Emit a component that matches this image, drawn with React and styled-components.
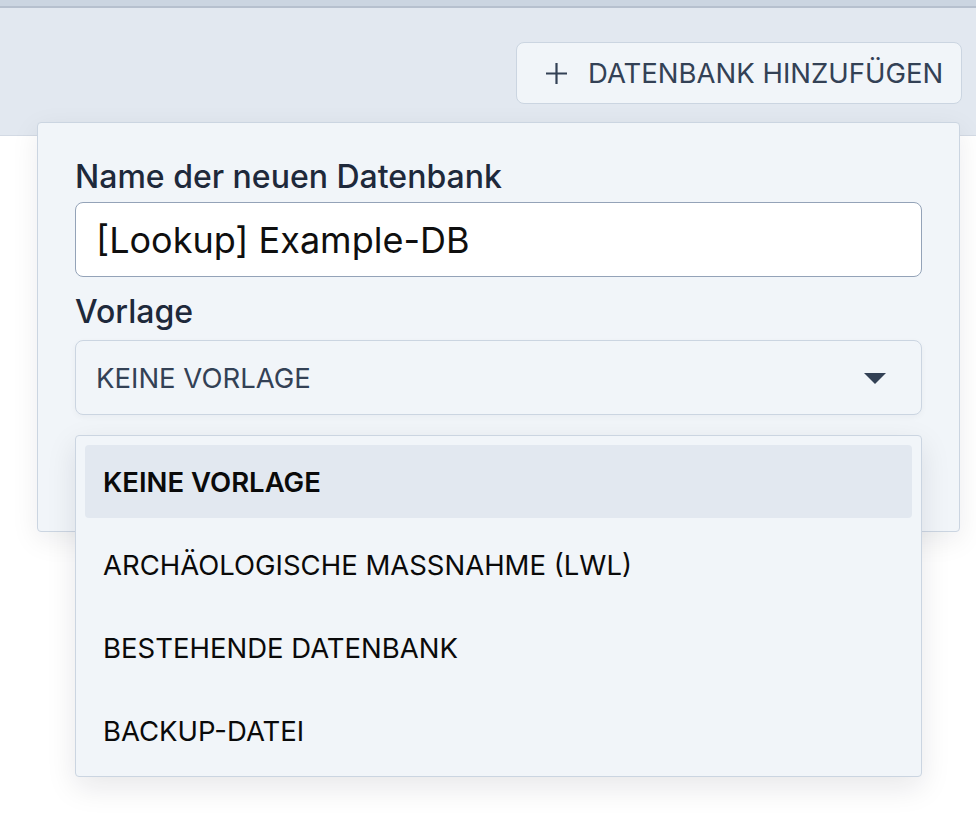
import React from "react";
import styled, { createGlobalStyle } from "styled-components";

const GlobalStyle = createGlobalStyle`
  body {
    margin: 0;
    background: #ffffff;
    font-family: Inter, "Noto Sans", sans-serif;
  }
`;

const Page = styled.div`
  position: relative;
  min-height: 820px;
`;

const TopStrip = styled.div`
  height: 6px;
  background: #cbd5e1;
  border-bottom: 2px solid #b6c0ce;
`;

const Header = styled.header`
  height: 128px;
  background: #e2e8f0;
  border-bottom: 1px solid #d3dae4;
  display: flex;
  justify-content: flex-end;
  align-items: flex-start;
  padding: 34px 14px 0 0;
  box-sizing: border-box;
`;

const AddButton = styled.button`
  height: 62px;
  width: 446px;
  box-sizing: border-box;
  display: flex;
  align-items: center;
  gap: 19px;
  padding: 0 21px 0 27px;
  background: #f1f5f9;
  border: 1.5px solid #cbd5e1;
  border-radius: 8px;
  color: #334155;
  font-family: inherit;
  font-size: 27.5px;
  font-weight: 400;
  white-space: nowrap;
  cursor: pointer;

  svg {
    flex-shrink: 0;
  }
`;

const Popover = styled.div`
  position: absolute;
  top: 122px;
  left: 37px;
  width: 923px;
  height: 410px;
  box-sizing: border-box;
  padding: 34px 37px 0;
  background: #f1f5f9;
  border: 1.5px solid #cbd5e1;
  border-radius: 4px;
  box-shadow: 0 8px 28px rgba(15, 23, 42, 0.08);
  display: flex;
  flex-direction: column;
`;

const Label = styled.label`
  font-size: 32px;
  line-height: 39px;
  font-weight: 500;
  color: #1e293b;
  margin-top: ${(p) => p.$top || 0}px;
`;

const TextInput = styled.input`
  margin-top: 6px;
  height: 75px;
  box-sizing: border-box;
  padding: 0 20px;
  border: 1.5px solid #94a3b8;
  border-radius: 8px;
  background: #ffffff;
  font-family: inherit;
  font-size: 36px;
  color: #0f0f0f;
  outline: none;
`;

const SelectWrap = styled.div`
  position: relative;
  margin-top: 9px;
`;

const SelectBox = styled.div`
  height: 75px;
  box-sizing: border-box;
  display: flex;
  align-items: center;
  justify-content: space-between;
  padding: 0 35px 0 20px;
  background: #f1f5f9;
  border: 1.5px solid #cbd5e1;
  border-radius: 8px;
  box-shadow: 0 2px 6px rgba(15, 23, 42, 0.04);
  font-size: 27.5px;
  color: #334155;
`;

const Caret = styled.span`
  width: 0;
  height: 0;
  border-left: 11.5px solid transparent;
  border-right: 11.5px solid transparent;
  border-top: 11px solid #334155;
  margin-top: 2px;
`;

const Menu = styled.ul`
  position: absolute;
  top: 95px;
  left: 0;
  right: 0;
  margin: 0;
  padding: 9px;
  list-style: none;
  display: flex;
  flex-direction: column;
  gap: 10px;
  background: #f1f5f9;
  border: 1.5px solid #cbd5e1;
  border-radius: 4px;
  box-shadow: 0 10px 30px rgba(15, 23, 42, 0.1);
  z-index: 2;
`;

const MenuItem = styled.li`
  height: 73px;
  display: flex;
  align-items: center;
  padding: 0 18px;
  border-radius: 4px;
  font-size: 27.5px;
  color: #0a0a0a;
  font-weight: ${(p) => (p.$active ? 600 : 400)};
  background: ${(p) => (p.$active ? "#e2e8f0" : "transparent")};
`;

const PlusIcon = () => (
  <svg width="25" height="25" viewBox="0 0 25 25" fill="none">
    <path d="M12.5 2v21M2 12.5h21" stroke="#334155" strokeWidth="2.2" />
  </svg>
);

const templates = [
  "KEINE VORLAGE",
  "ARCHÄOLOGISCHE MASSNAHME (LWL)",
  "BESTEHENDE DATENBANK",
  "BACKUP-DATEI",
];

const App = () => {
  return (
    <Page>
      <GlobalStyle />
      <TopStrip />
      <Header>
        <AddButton>
          <PlusIcon />
          DATENBANK HINZUFÜGEN
        </AddButton>
      </Header>
      <Popover>
        <Label>Name der neuen Datenbank</Label>
        <TextInput defaultValue="[Lookup] Example-DB" />
        <Label $top={15}>Vorlage</Label>
        <SelectWrap>
          <SelectBox>
            KEINE VORLAGE
            <Caret />
          </SelectBox>
          <Menu>
            {templates.map((t, i) => (
              <MenuItem key={t} $active={i === 0}>
                {t}
              </MenuItem>
            ))}
          </Menu>
        </SelectWrap>
      </Popover>
    </Page>
  );
};

export default App;
